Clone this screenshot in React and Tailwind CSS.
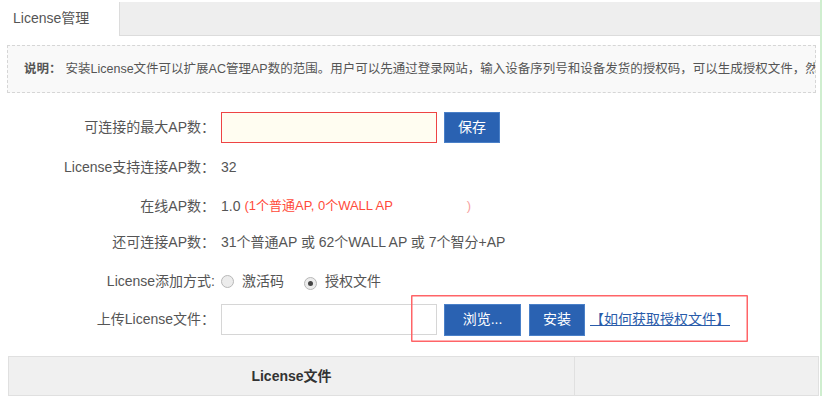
import React from 'react';

const font = { fontFamily: '"Liberation Sans", "Noto Sans CJK SC", sans-serif' };

function Row({ label, h, children }) {
  return (
    <div className={`flex items-center ${h}`}>
      <div className="w-[215px] shrink-0 text-right text-[14px] text-[#555]">{label}</div>
      <div className="ml-[6px] flex items-center text-[14px] text-[#555]">{children}</div>
    </div>
  );
}

function Radio({ checked }) {
  return (
    <span className="inline-flex h-[13px] w-[13px] items-center justify-center rounded-full border border-[#b8b8b8] bg-[#ececec]">
      {checked && <span className="h-[5px] w-[5px] rounded-full bg-[#444]" />}
    </span>
  );
}

export default function App() {
  return (
    <div className="relative h-[396px] w-[822px] overflow-hidden bg-white" style={font}>
      <div className="absolute right-0 top-0 h-full w-[2px] bg-[#cfeecf]" />

      {/* 标签栏 */}
      <div className="flex h-[36px] w-[820px]">
        <div className="flex w-[119px] items-center pl-[13px] text-[14px] text-[#555]">License管理</div>
        <div className="mt-[2px] flex-1 border-b border-l border-[#dcdcdc] bg-[#eeeeee]" />
      </div>

      {/* 说明 */}
      <div className="ml-[7px] mt-[9px] flex h-[48px] w-[809px] items-center overflow-hidden whitespace-nowrap border border-dashed border-[#d6d6d6] bg-[#f9f9f9] pl-[16px] text-[12.5px] text-[#555]">
        <b className="mr-[4px]">说明：</b>
        安装License文件可以扩展AC管理AP数的范围。用户可以先通过登录网站，输入设备序列号和设备发货的授权码，可以生成授权文件，然后上传授权文件进行安装。
      </div>

      {/* 表单 */}
      <div className="relative mt-[15px] flex flex-col">
        <Row label="可连接的最大AP数：" h="h-[39px]">
          <input className="h-[31px] w-[216px] border border-[#ee4444] bg-[#fffdf1] outline-none" />
          <button className="ml-[7px] h-[31px] w-[56px] border border-[#4a80c8] bg-[#2a62b2] text-[14px] text-white">保存</button>
        </Row>
        <Row label="License支持连接AP数：" h="h-[40px]">
          32
        </Row>
        <Row label="在线AP数：" h="h-[38px]">
          <span>1.0</span>
          <span className="ml-[4px] text-[13px] text-[#ff4a3a]">(1个普通AP, 0个WALL AP</span>
          <span className="ml-[74px] text-[13px] text-[#f7a1a1]">)</span>
        </Row>
        <Row label="还可连接AP数：" h="h-[34px]">
          31个普通AP 或 62个WALL AP 或 7个智分+AP
        </Row>
        <Row label="License添加方式:" h="h-[44px]">
          <Radio />
          <span className="ml-[8px]">激活码</span>
          <span className="ml-[20px]"><Radio checked /></span>
          <span className="ml-[8px]">授权文件</span>
        </Row>
        <Row label="上传License文件：" h="h-[33px]">
          <input className="h-[31px] w-[216px] border border-[#d6d6d6] bg-white outline-none" />
          <button className="ml-[7px] h-[32px] w-[77px] border border-[#4a80c8] bg-[#2a62b2] text-[14px] text-white">浏览...</button>
          <button className="ml-[8px] h-[32px] w-[56px] border border-[#4a80c8] bg-[#2a62b2] text-[14px] text-white">安装</button>
          <a className="ml-[5px] text-[14px] text-[#2a5caa] underline">【如何获取授权文件】</a>
        </Row>
        {/* 标注框 */}
        <div className="pointer-events-none absolute left-[411px] top-[187px] h-[47px] w-[337px] rounded-[1px] ring-[1.5px] ring-inset ring-red-400" />
      </div>

      {/* 表格 */}
      <div className="ml-[8px] mt-[20px] flex h-[40px] w-[811px] border border-[#e0e0e0] bg-[#f0f0f0]">
        <div className="flex w-[566px] items-center justify-center border-r border-[#e0e0e0] text-[14px] font-bold text-[#333]">License文件</div>
        <div className="flex-1" />
      </div>
    </div>
  );
}
